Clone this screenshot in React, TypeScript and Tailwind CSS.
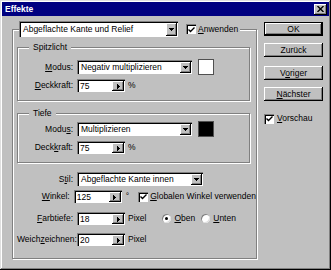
import type { ReactNode } from "react";

const raised =
  "bg-[#c0c0c0] shadow-[inset_-1px_-1px_0_#000,inset_1px_1px_0_#fff,inset_-2px_-2px_0_#808080]";
const sunken = "bg-white shadow-[inset_1px_1px_0_#808080,inset_2px_2px_0_#000]";
const etched = "border border-[#808080] shadow-[1px_1px_0_#fff,inset_1px_1px_0_#fff]";

function DownArrow() {
  return (
    <svg width="5" height="3" viewBox="0 0 5 3">
      <path d="M0 0h5v1H0zM1 1h3v1H1zM2 2h1v1H2z" fill="#000" />
    </svg>
  );
}

function RightArrow() {
  return (
    <svg width="3" height="5" viewBox="0 0 3 5">
      <path d="M0 0h1v5H0zM1 1h1v3H1zM2 2h1v1H2z" fill="#000" />
    </svg>
  );
}

function Select({ value, className }: { value: string; className: string }) {
  return (
    <div className={`flex ${sunken} pl-[2px] pt-[2px] pr-[1px] pb-[1px] ${className}`}>
      <span className="flex-1 flex items-center pl-[2px] whitespace-nowrap overflow-hidden">{value}</span>
      <span className={`w-[11px] flex items-center justify-center ${raised}`}>
        <DownArrow />
      </span>
    </div>
  );
}

function Spin({ value }: { value: string }) {
  return (
    <div className={`flex w-[48px] h-[13px] ${sunken} pl-[2px] pt-[2px] pr-[1px] pb-[1px]`}>
      <span className="flex-1 flex items-center pl-[1px]">{value}</span>
      <span className={`w-[12px] flex items-center justify-center ${raised}`}>
        <RightArrow />
      </span>
    </div>
  );
}

function Check({ checked }: { checked?: boolean }) {
  return (
    <span className={`shrink-0 w-[10px] h-[10px] flex items-center justify-center ${sunken}`}>
      {checked && (
        <svg width="7" height="6" viewBox="0 0 7 6" className="ml-[1px] mt-[1px]">
          <path d="M0.5 2.5L2.5 4.5L6.5 0.5" stroke="#000" strokeWidth="1.4" fill="none" />
        </svg>
      )}
    </span>
  );
}

function Radio({ checked }: { checked?: boolean }) {
  return (
    <span
      className={`shrink-0 w-[9px] h-[9px] rounded-full bg-white flex items-center justify-center shadow-[inset_1px_1px_0_#808080,inset_-1px_-1px_0_#dfdfdf]`}
    >
      {checked && <span className="w-[3px] h-[3px] rounded-full bg-black" />}
    </span>
  );
}

function Button({ children, primary }: { children: ReactNode; primary?: boolean }) {
  if (primary) {
    return (
      <div className="h-[14px] border border-black flex">
        <div className={`flex-1 flex items-center justify-center ${raised}`}>{children}</div>
      </div>
    );
  }
  return <div className={`h-[14px] flex items-center justify-center ${raised}`}>{children}</div>;
}

function Box({ title, className, children }: { title: string; className: string; children: ReactNode }) {
  return (
    <div className={`relative w-[233px] flex flex-col ${etched} ${className}`}>
      <span className="absolute left-[11px] top-[-7px] px-[4px] bg-[#c0c0c0] leading-[12px]">{title}</span>
      {children}
    </div>
  );
}

function Lbl({ children, w }: { children: ReactNode; w: string }) {
  return <span className={`${w} text-right whitespace-nowrap`}>{children}</span>;
}

export default function App() {
  return (
    <div className="w-[331px] h-[270px] bg-[#c0c0c0] p-[2px] text-[8.5px] leading-[11px] text-black [font-family:'Liberation_Sans',Arial,sans-serif] shadow-[inset_-1px_-1px_0_#000,inset_1px_1px_0_#dfdfdf,inset_-2px_-2px_0_#808080,inset_2px_2px_0_#fff]">
      {/* Title bar */}
      <div className="h-[14px] bg-[#000080] flex items-center pl-[3px] pr-[2px]">
        <span className="flex-1 text-white font-bold">Effekte</span>
        <span className={`w-[13px] h-[11px] flex items-center justify-center ${raised}`}>
          <svg width="7" height="6" viewBox="0 0 7 6">
            <path d="M0.5 0L6.5 6M6.5 0L0.5 6" stroke="#000" strokeWidth="1.4" />
          </svg>
        </span>
      </div>

      <div className="flex pl-[10px] pt-[6px]">
        {/* Main group */}
        <div className={`relative w-[245px] h-[230px] mt-[7px] pt-[17px] pl-[4px] flex flex-col ${etched}`}>
          <div className="absolute left-[6px] top-[-9px] flex items-center bg-[#c0c0c0] pr-[2px]">
            <Select value="Abgeflachte Kante und Relief" className="w-[159px] h-[16px]" />
            <span className="ml-[8px]">
              <Check checked />
            </span>
            <span className="ml-[2px]">
              <u>A</u>nwenden
            </span>
          </div>

          <Box title="Spitzlicht" className="h-[54px] pt-[12px] gap-[5px]">
            <div className="flex items-center h-[14px]">
              <Lbl w="w-[55px]">
                <u>M</u>odus:
              </Lbl>
              <Select value="Negativ multiplizieren" className="ml-[4px] w-[115px] h-[14px]" />
              <span className="ml-[6px] w-[16px] h-[16px] bg-white border border-[#505050]" />
            </div>
            <div className="flex items-center h-[13px]">
              <Lbl w="w-[55px]">
                <u>D</u>eckkraft:
              </Lbl>
              <span className="ml-[4px]">
                <Spin value="75" />
              </span>
              <span className="ml-[3px]">%</span>
            </div>
          </Box>

          <Box title="Tiefe" className="mt-[12px] h-[50px] pt-[8px] gap-[5px]">
            <div className="flex items-center h-[14px]">
              <Lbl w="w-[55px]">
                Modu<u>s</u>:
              </Lbl>
              <Select value="Multiplizieren" className="ml-[4px] w-[115px] h-[14px]" />
              <span className="ml-[6px] w-[16px] h-[16px] bg-black border border-[#505050]" />
            </div>
            <div className="flex items-center h-[13px]">
              <Lbl w="w-[55px]">
                Deck<u>k</u>raft:
              </Lbl>
              <span className="ml-[4px]">
                <Spin value="75" />
              </span>
              <span className="ml-[3px]">%</span>
            </div>
          </Box>

          <div className="mt-[9px] flex items-center h-[14px]">
            <Lbl w="w-[56px]">
              S<u>t</u>il:
            </Lbl>
            <Select value="Abgeflachte Kante innen" className="ml-[4px] w-[126px] h-[14px]" />
          </div>

          <div className="mt-[4px] flex items-center h-[13px]">
            <Lbl w="w-[56px]">
              <u>W</u>inkel:
            </Lbl>
            <span className="ml-[4px]">
              <Spin value="125" />
            </span>
            <span className="ml-[4px]">°</span>
            <span className="ml-[9px]">
              <Check checked />
            </span>
            <span className="ml-[2px] whitespace-nowrap">
              <u>G</u>lobalen Winkel verwenden
            </span>
          </div>

          <div className="mt-[9px] flex items-center h-[13px]">
            <Lbl w="w-[56px]">
              <u>F</u>arbtiefe:
            </Lbl>
            <span className="ml-[4px]">
              <Spin value="18" />
            </span>
            <span className="ml-[3px]">Pixel</span>
            <span className="ml-[16px]">
              <Radio checked />
            </span>
            <span className="ml-[3px]">
              <u>O</u>ben
            </span>
            <span className="ml-[6px]">
              <Radio />
            </span>
            <span className="ml-[3px]">
              <u>U</u>nten
            </span>
          </div>

          <div className="mt-[8px] flex items-center h-[13px]">
            <Lbl w="w-[56px]">
              Weich<u>z</u>eichnen:
            </Lbl>
            <span className="ml-[4px]">
              <Spin value="20" />
            </span>
            <span className="ml-[3px]">Pixel</span>
          </div>
        </div>

        {/* Buttons */}
        <div className="ml-[7px] w-[59px] flex flex-col">
          <Button primary>OK</Button>
          <div className="mt-[7px]">
            <Button>Zurück</Button>
          </div>
          <div className="mt-[9px]">
            <Button>
              <span>
                V<u>o</u>riger
              </span>
            </Button>
          </div>
          <div className="mt-[7px]">
            <Button>
              <span>
                <u>N</u>ächster
              </span>
            </Button>
          </div>
          <div className="mt-[12px] flex items-center">
            <Check checked />
            <span className="ml-[3px]">
              <u>V</u>orschau
            </span>
          </div>
        </div>
      </div>
    </div>
  );
}
